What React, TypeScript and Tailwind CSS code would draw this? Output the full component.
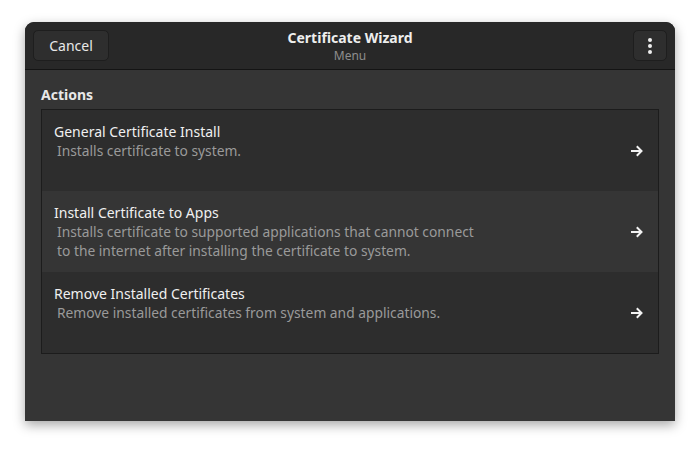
import React from "react";

const rows = [
  { title: "General Certificate Install", desc: ["Installs certificate to system."], hover: false },
  {
    title: "Install Certificate to Apps",
    desc: [
      "Installs certificate to supported applications that cannot connect",
      "to the internet after installing the certificate to system.",
    ],
    hover: true,
  },
  { title: "Remove Installed Certificates", desc: ["Remove installed certificates from system and applications."], hover: false },
];

function Arrow() {
  return (
    <svg width="14" height="14" viewBox="0 0 14 14" fill="none">
      <path d="M2 7h9M7.5 3l4 4-4 4" stroke="#f2f2f2" strokeWidth="2" strokeLinecap="square" />
    </svg>
  );
}

export default function App() {
  return (
    <div
      className="w-[700px] h-[449px] bg-white pt-[22px] pl-[25px]"
      style={{ fontFamily: '"Noto Sans", "Open Sans", sans-serif' }}
    >
      <div className="w-[650px] h-[399px] bg-[#353535] rounded-t-[9px] shadow-[0_4px_12px_rgba(0,0,0,0.35)] flex flex-col overflow-hidden">
        <div className="h-[48px] bg-[#282828] border-b border-[#141414] flex items-center px-[8px] shrink-0">
          <div className="flex-1 flex justify-start">
            <button className="w-[76px] h-[31px] rounded-[5px] bg-[#2e2e2e] border border-[#1e1e1e] text-[#e8e8e8] text-[14px] leading-none">
              Cancel
            </button>
          </div>
          <div className="flex flex-col items-center leading-none pt-[1px]">
            <div className="text-[14px] font-bold text-[#eeeeee]">Certificate Wizard</div>
            <div className="text-[12px] text-[#8e8e8e] mt-[5px]">Menu</div>
          </div>
          <div className="flex-1 flex justify-end">
            <button className="w-[34px] h-[31px] rounded-[5px] bg-[#2e2e2e] border border-[#1e1e1e] flex flex-col items-center justify-center gap-[2px]">
              <span className="w-[4px] h-[4px] rounded-full bg-[#eeeeee]" />
              <span className="w-[4px] h-[4px] rounded-full bg-[#eeeeee]" />
              <span className="w-[4px] h-[4px] rounded-full bg-[#eeeeee]" />
            </button>
          </div>
        </div>
        <div className="px-[16px] pt-[15px]">
          <div className="text-[14px] font-bold text-[#e8e8e8] leading-[20px] mb-[4px]">Actions</div>
          <div className="border border-[#1c1c1c] flex flex-col">
            {rows.map((r, i) => (
              <div
                key={i}
                className={`h-[81px] flex items-center justify-between pl-[12px] pr-[14px] ${
                  r.hover ? "bg-[#353535]" : "bg-[#2d2d2d]"
                }`}
              >
                <div className="flex flex-col self-start mt-[12px]">
                  <div className="text-[14px] text-[#f0f0f0] leading-[19px]">{r.title}</div>
                  {r.desc.map((d, j) => (
                    <div key={j} className="text-[13.8px] text-[#9a9a9a] leading-[19px] pl-[3px]">
                      {d}
                    </div>
                  ))}
                </div>
                <Arrow />
              </div>
            ))}
          </div>
        </div>
      </div>
    </div>
  );
}
